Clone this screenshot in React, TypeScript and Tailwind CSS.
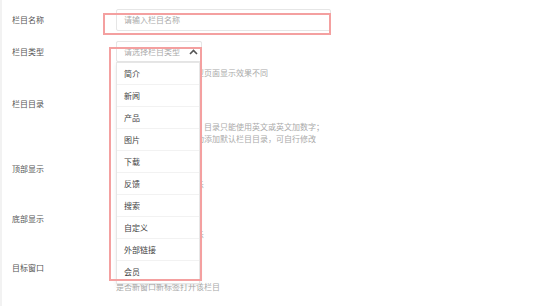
import React from 'react';

const options = ['简介', '新闻', '产品', '图片', '下载', '反馈', '搜索', '自定义', '外部链接', '会员'];

const Switch: React.FC = () => (
  <div className="h-[20px] flex items-center">
    <div className="w-[36px] h-[16px] rounded-full border border-[#d2d2d2] bg-white" />
  </div>
);

const App: React.FC = () => {
  return (
    <div
      className="relative w-[554px] h-[306px] bg-white border-l-2 border-[#f2f2f2] overflow-hidden text-[8px] text-[#555]"
      style={{ fontFamily: '"Noto Sans CJK SC", "Noto Sans", sans-serif' }}
    >
      {/* 栏目名称 */}
      <div className="flex pt-[9px]">
        <label className="w-[114px] pl-[10px] leading-[22px]">栏目名称</label>
        <div className="w-[215px] h-[22px] border border-[#e6e6e6] rounded-[2px] px-[7px] leading-[20px] text-[#aaa]">
          请输入栏目名称
        </div>
      </div>

      {/* 栏目类型 */}
      <div className="flex mt-[10px]">
        <label className="w-[114px] pl-[10px] leading-[21px]">栏目类型</label>
        <div className="flex flex-col">
          <div className="w-[86px] h-[21px] border border-[#e6e6e6] rounded-[2px]" />
          <p className="mt-[4px] leading-[14px] text-[#aaa] whitespace-nowrap">请注意，不同的栏目类型页面显示效果不同</p>
        </div>
      </div>

      {/* 栏目目录 */}
      <div className="flex mt-[13px]">
        <label className="w-[114px] pl-[10px] leading-[22px]">栏目目录</label>
        <div className="flex flex-col">
          <div className="w-[80px] h-[22px] border border-[#e6e6e6] rounded-[2px]" />
          <p className="mt-[6px] leading-[12px] text-[#aaa] whitespace-nowrap">用于生成栏目访问路径，目录只能使用英文或英文加数字；</p>
          <p className="leading-[12px] text-[#aaa] whitespace-nowrap">如果不填写，系统将自动添加默认栏目目录，可自行修改</p>
        </div>
      </div>

      {/* 顶部显示 */}
      <div className="flex mt-[14px]">
        <label className="w-[114px] pl-[10px] leading-[20px]">顶部显示</label>
        <div className="flex flex-col">
          <Switch />
          <p className="leading-[12px] text-[#aaa] whitespace-nowrap">是否在顶部导航栏中显示</p>
        </div>
      </div>

      {/* 底部显示 */}
      <div className="flex mt-[18px]">
        <label className="w-[114px] pl-[10px] leading-[20px]">底部显示</label>
        <div className="flex flex-col">
          <Switch />
          <p className="leading-[12px] text-[#aaa] whitespace-nowrap">是否在底部导航栏中显示</p>
        </div>
      </div>

      {/* 目标窗口 */}
      <div className="flex mt-[17px]">
        <label className="w-[114px] pl-[10px] leading-[20px]">目标窗口</label>
        <div className="flex flex-col">
          <Switch />
          <p className="mt-[3px] leading-[12px] text-[#aaa] whitespace-nowrap">是否新窗口新标签打开该栏目</p>
        </div>
      </div>

      {/* open select */}
      <div className="absolute left-[114px] top-[41px] w-[86px] h-[21px] bg-white border border-[#e6e6e6] rounded-[2px] flex items-center justify-between pl-[7px] pr-[3px]">
        <span className="text-[#aaa]">请选择栏目类型</span>
        <svg width="9" height="6" viewBox="0 0 9 6">
          <polyline points="1,5 4.5,1.5 8,5" fill="none" stroke="#555" strokeWidth="1.6" />
        </svg>
      </div>
      <ul className="absolute left-[114px] top-[62px] w-[84px] bg-white border border-[#e6e6e6] shadow-[0_2px_4px_rgba(0,0,0,0.08)]">
        {options.map((o, i) => (
          <li
            key={o}
            className={`h-[22px] leading-[22px] pl-[7px] text-[#444] ${i < options.length - 1 ? 'border-b border-[#f2f2f2]' : ''}`}
          >
            {o}
          </li>
        ))}
      </ul>

      {/* annotation boxes */}
      <div className="absolute left-[101px] top-[13px] w-[228px] h-[22px] border-2 border-[#f4a0a0]" />
      <div className="absolute left-[107px] top-[47px] w-[93px] h-[234px] border-2 border-[#f4a0a0]" />
    </div>
  );
};

export default App;
